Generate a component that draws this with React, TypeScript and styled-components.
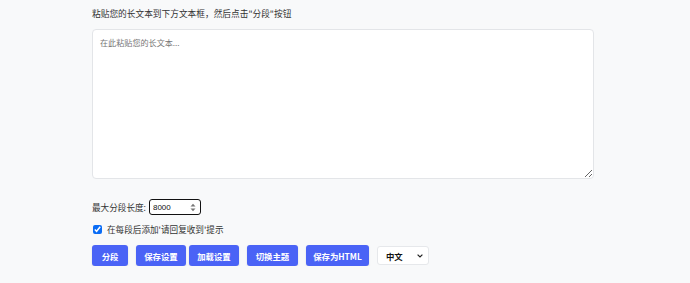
import React, { useState } from "react";
import styled, { createGlobalStyle } from "styled-components";

const GlobalStyle = createGlobalStyle`
	html, body {
		margin: 0;
		padding: 0;
		background: #f8f9fa;
	}
	body {
		font-family: "Noto Sans CJK SC", "Noto Sans", "Liberation Sans", sans-serif;
		color: #333;
	}
`;

const buttons = [
	{ label: "分段", width: 36, gap: 8 },
	{ label: "保存设置", width: 50, gap: 3 },
	{ label: "加载设置", width: 50, gap: 8 },
	{ label: "切换主题", width: 51, gap: 8 },
	{ label: "保存为HTML", width: 63, gap: 8 },
];

export default function App() {
	const [text, setText] = useState("");
	const [maxLen, setMaxLen] = useState("8000");
	const [addHint, setAddHint] = useState(true);
	const [lang, setLang] = useState("zh");

	return (
		<Page>
			<GlobalStyle />
			<Intro>粘贴您的长文本到下方文本框，然后点击"分段"按钮</Intro>
			<TextArea
				value={text}
				onChange={e => setText(e.currentTarget.value)}
				placeholder="在此粘贴您的长文本..."
			/>
			<LengthRow>
				<Label>最大分段长度:</Label>
				<NumberBox>
					<NumberInput
						value={maxLen}
						onChange={e => setMaxLen(e.currentTarget.value)}
					/>
					<svg width="6" height="9" viewBox="0 0 6 9">
						<path d="M0.5 3.5 L3 0.8 L5.5 3.5 Z" fill="#777" />
						<path d="M0.5 5.5 L3 8.2 L5.5 5.5 Z" fill="#777" />
					</svg>
				</NumberBox>
			</LengthRow>
			<CheckRow>
				<CheckBox
					type="checkbox"
					checked={addHint}
					onChange={e => setAddHint(e.currentTarget.checked)}
				/>
				<CheckLabel>在每段后添加'请回复收到'提示</CheckLabel>
			</CheckRow>
			<Toolbar>
				{buttons.map(b => (
					<ActionButton key={b.label} $width={b.width} $gap={b.gap}>
						{b.label}
					</ActionButton>
				))}
				<SelectBox>
					<LangSelect value={lang} onChange={e => setLang(e.currentTarget.value)}>
						<option value="zh">中文</option>
						<option value="en">English</option>
					</LangSelect>
					<svg width="6" height="4" viewBox="0 0 6 4">
						<path d="M0.6 0.6 L3 3 L5.4 0.6" fill="none" stroke="#222" strokeWidth="1.2" />
					</svg>
				</SelectBox>
			</Toolbar>
		</Page>
	);
}

const Page = styled.div`
	width: 502px;
	margin-left: 92px;
	padding-top: 7px;
	display: flex;
	flex-direction: column;
`;

const Intro = styled.div`
	font-size: 8.7px;
	line-height: 14px;
	color: #333;
	margin-bottom: 8px;
`;

const TextArea = styled.textarea`
	box-sizing: border-box;
	width: 502px;
	height: 150px;
	padding: 7px 7px;
	border: 1px solid #e3e5e8;
	border-radius: 4px;
	background: #fff;
	font-family: inherit;
	font-size: 8.1px;
	line-height: 12px;
	color: #333;
	outline: none;

	&::placeholder {
		color: #777;
	}
`;

const LengthRow = styled.div`
	display: flex;
	align-items: center;
	margin-top: 20px;
	height: 16px;
`;

const Label = styled.span`
	font-size: 8.6px;
	color: #333;
	margin-right: 3px;
`;

const NumberBox = styled.div`
	box-sizing: border-box;
	width: 52px;
	height: 16px;
	display: flex;
	align-items: center;
	padding: 0 4px 0 3px;
	border: 1.5px solid #111;
	border-radius: 3px;
	background: #fff;
`;

const NumberInput = styled.input`
	flex: 1;
	min-width: 0;
	border: none;
	outline: none;
	padding: 0;
	background: transparent;
	font-family: "Liberation Sans", sans-serif;
	font-size: 8px;
	color: #111;
`;

const CheckRow = styled.div`
	display: flex;
	align-items: center;
	margin-top: 9px;
	height: 10px;
	padding-left: 1px;
`;

const CheckBox = styled.input`
	width: 9px;
	height: 9px;
	margin: 0 5px 0 0;
	accent-color: #0a6cf5;
`;

const CheckLabel = styled.span`
	font-size: 8.6px;
	color: #333;
`;

const Toolbar = styled.div`
	display: flex;
	align-items: center;
	margin-top: 11px;
`;

const ActionButton = styled.button<{ $width: number; $gap: number }>`
	box-sizing: border-box;
	width: ${({ $width }) => $width}px;
	height: 21px;
	margin-right: ${({ $gap }) => $gap}px;
	padding: 0;
	border: none;
	border-radius: 3px;
	background: #4a63f6;
	color: #fff;
	font-family: inherit;
	font-size: 8.4px;
	font-weight: 700;
	box-shadow: 0 1px 2px rgba(0, 0, 0, 0.12);
	cursor: pointer;
`;

const SelectBox = styled.div`
	box-sizing: border-box;
	width: 52px;
	height: 19px;
	display: flex;
	align-items: center;
	padding-right: 5px;
	border: 1px solid #e6e8eb;
	border-radius: 3px;
	background: #fff;
`;

const LangSelect = styled.select`
	flex: 1;
	min-width: 0;
	height: 100%;
	appearance: none;
	padding: 0 0 0 8px;
	border: none;
	background: transparent;
	font-family: inherit;
	font-size: 8.4px;
	font-weight: 700;
	color: #111;
	outline: none;
`;
